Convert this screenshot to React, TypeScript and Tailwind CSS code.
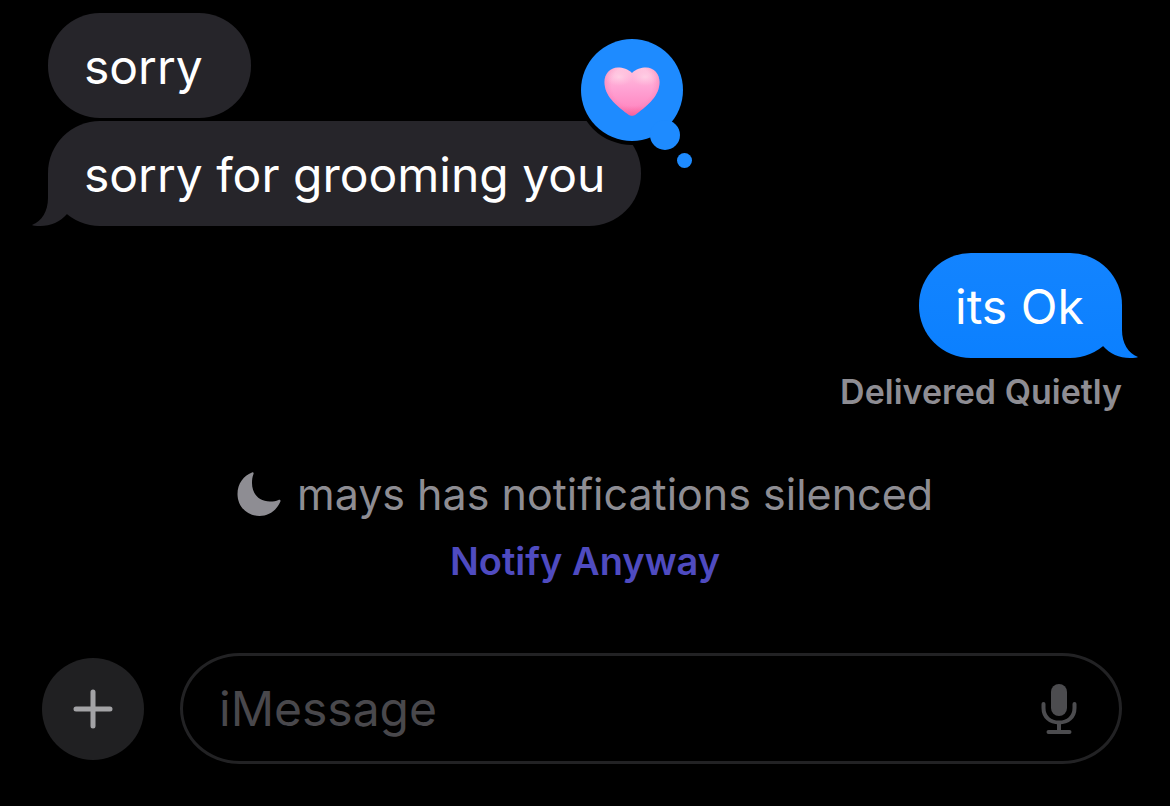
import React from "react";

function Tail({ side }: { side: "left" | "right" }) {
  const left = side === "left";
  return (
    <svg
      aria-hidden="true"
      viewBox="0 0 36 52"
      className={
        left
          ? "absolute bottom-0 -left-4 h-[52px] w-9"
          : "absolute -right-4 bottom-0 h-[52px] w-9 -scale-x-100"
      }
    >
      <defs>
        <linearGradient id={`tail-${side}`} gradientUnits="userSpaceOnUse" x1="0" y1="0" x2="0" y2="52">
          <stop offset="0" stopColor={left ? "#26252a" : "#0f82ff"} />
          <stop offset="1" stopColor={left ? "#26252a" : "#0b80ff"} />
        </linearGradient>
      </defs>
      <path
        fill={`url(#tail-${side})`}
        d="M16 0 V24 C16 37 10 47 0 51 C1 51.600 4 52 8 52 C19 52 28 48 35 40 L36 0 Z"
      />
    </svg>
  );
}

const heartPath =
  "M28 6 C24 2 19 0.500 14 0.500 C6 0.500 0.500 7 0.500 15 C0.500 29 12 38 23 46.500 C26.500 49.500 29.500 49.500 33 46.500 C44 38 55.500 29 55.500 15 C55.500 7 50 0.500 42 0.500 C37 0.500 32 2 28 6 Z";

function Heart() {
  return (
    <svg viewBox="0 0 56 50" className="h-[50px] w-14" role="img" aria-label="Heart">
      <defs>
        <linearGradient id="heartBase" x1="0" y1="0" x2="0" y2="1">
          <stop offset="0" stopColor="#ffc4de" />
          <stop offset="0.45" stopColor="#ffa2d3" />
          <stop offset="0.8" stopColor="#ff8cc4" />
          <stop offset="1" stopColor="#fb66a0" />
        </linearGradient>
        <radialGradient id="heartShade" gradientUnits="userSpaceOnUse" cx="28" cy="18" r="31">
          <stop offset="0.65" stopColor="#ff6fae" stopOpacity="0" />
          <stop offset="1" stopColor="#ee5f96" stopOpacity="0.5" />
        </radialGradient>
        <radialGradient id="heartGlow">
          <stop offset="0" stopColor="#ffe0ec" stopOpacity="0.6" />
          <stop offset="1" stopColor="#ffd0e6" stopOpacity="0" />
        </radialGradient>
      </defs>
      <path fill="url(#heartBase)" d={heartPath} />
      <path fill="url(#heartShade)" d={heartPath} />
      <ellipse cx="15" cy="10" rx="14" ry="9" fill="url(#heartGlow)" />
      <ellipse cx="41" cy="10" rx="14" ry="9" fill="url(#heartGlow)" />
    </svg>
  );
}

function Reaction() {
  return (
    <div className="absolute -top-[86px] -right-[55px] h-[136px] w-[119px]">
      <svg aria-hidden="true" viewBox="0 0 119 136" className="absolute inset-0 h-full w-full">
        <g fill="#000">
          <circle cx="55" cy="55" r="55" />
          <circle cx="88" cy="100" r="19" />
        </g>
        <g fill="#1e8bff">
          <circle cx="55" cy="55" r="51" />
          <circle cx="88" cy="100" r="15" />
          <circle cx="107.500" cy="125.500" r="7.500" />
        </g>
      </svg>
      <div className="relative flex h-[114px] w-[110px] items-center justify-center">
        <Heart />
      </div>
    </div>
  );
}

const bubble =
  "relative min-w-[203px] rounded-[52px] px-9 pt-[21px] pb-[19px] text-[48px] leading-[65px] whitespace-nowrap text-white";

export default function App() {
  return (
    <div className="flex min-h-screen flex-col bg-black font-['Inter',sans-serif]">
      <main className="flex flex-col px-12 pt-[13px]">
        <section aria-label="Conversation" className="flex flex-col">
          <div className="flex flex-col items-start gap-[3px]">
            <div className={`${bubble} bg-[#26252a]`}>
              <p>sorry</p>
            </div>
            <div className={`${bubble} bg-[#26252a]`}>
              <Tail side="left" />
              <p className="relative">sorry for grooming you</p>
              <Reaction />
            </div>
          </div>
          <div className="mt-[27px] flex flex-col items-end">
            <div className={`${bubble} bg-linear-to-b from-[#1384ff] to-[#0b80ff]`}>
              <Tail side="right" />
              <p className="relative">its Ok</p>
            </div>
            <p className="mt-3 text-[34px] leading-[44px] font-semibold text-[#8e8d93]">Delivered Quietly</p>
          </div>
        </section>

        <section aria-label="Focus status" className="mt-[50px] flex flex-col items-center">
          <p className="flex items-center gap-4 text-[43px] leading-[60px] text-[#8e8d93]">
            <svg aria-hidden="true" viewBox="0 0 44 44" className="h-11 w-11" fill="currentColor">
              <path d="M15 0.500 C16.200 0 17 0.800 16.500 2 C15.300 5 15 8 15 11 C15 22 22 29.500 33 29.500 C36.500 29.500 39 29 41.500 28 C43 27.500 43.900 28.300 43.400 29.600 C40 38 32 44 22.500 44 C10 44 0.500 34.500 0.500 22 C0.500 12 6.500 3.500 15 0.500 Z" />
            </svg>
            mays has notifications silenced
          </p>
          <button type="button" className="mt-3 text-[38px] leading-[50px] font-semibold text-[#4f4bc0]">
            Notify Anyway
          </button>
        </section>
      </main>

      <form
        className="mt-[67px] flex items-center gap-9 pr-12 pl-[42px]"
        onSubmit={(event) => event.preventDefault()}
      >
        <button
          type="button"
          aria-label="Add attachment"
          className="flex size-[102px] shrink-0 items-center justify-center rounded-full bg-[#202022] text-[#a3a3a6]"
        >
          <svg aria-hidden="true" viewBox="0 0 40 40" className="size-10">
            <path d="M20 3 V37 M3 20 H37" fill="none" stroke="currentColor" strokeWidth="5" strokeLinecap="round" />
          </svg>
        </button>
        <div className="flex h-[111px] min-w-0 flex-1 items-center rounded-[60px/56px] border-[3px] border-[#222224] pr-[42px] pl-9">
          <input
            type="text"
            aria-label="iMessage"
            placeholder="iMessage"
            className="min-w-0 flex-1 bg-transparent text-[48px] leading-[64px] text-white outline-none placeholder:text-[#49484c]"
          />
          <button type="button" aria-label="Dictate" className="shrink-0 text-[#4c4c4f]">
            <svg aria-hidden="true" viewBox="0 0 36 52" className="h-[52px] w-9">
              <rect x="10" y="1" width="16" height="32" rx="8" fill="currentColor" />
              <path
                d="M2.500 21 V25 C2.500 34 9 39.500 18 39.500 C27 39.500 33.500 34 33.500 25 V21 M18 40 V48 M7.500 49 H28.500"
                fill="none"
                stroke="currentColor"
                strokeWidth="4"
                strokeLinecap="round"
              />
            </svg>
          </button>
        </div>
      </form>
    </div>
  );
}
